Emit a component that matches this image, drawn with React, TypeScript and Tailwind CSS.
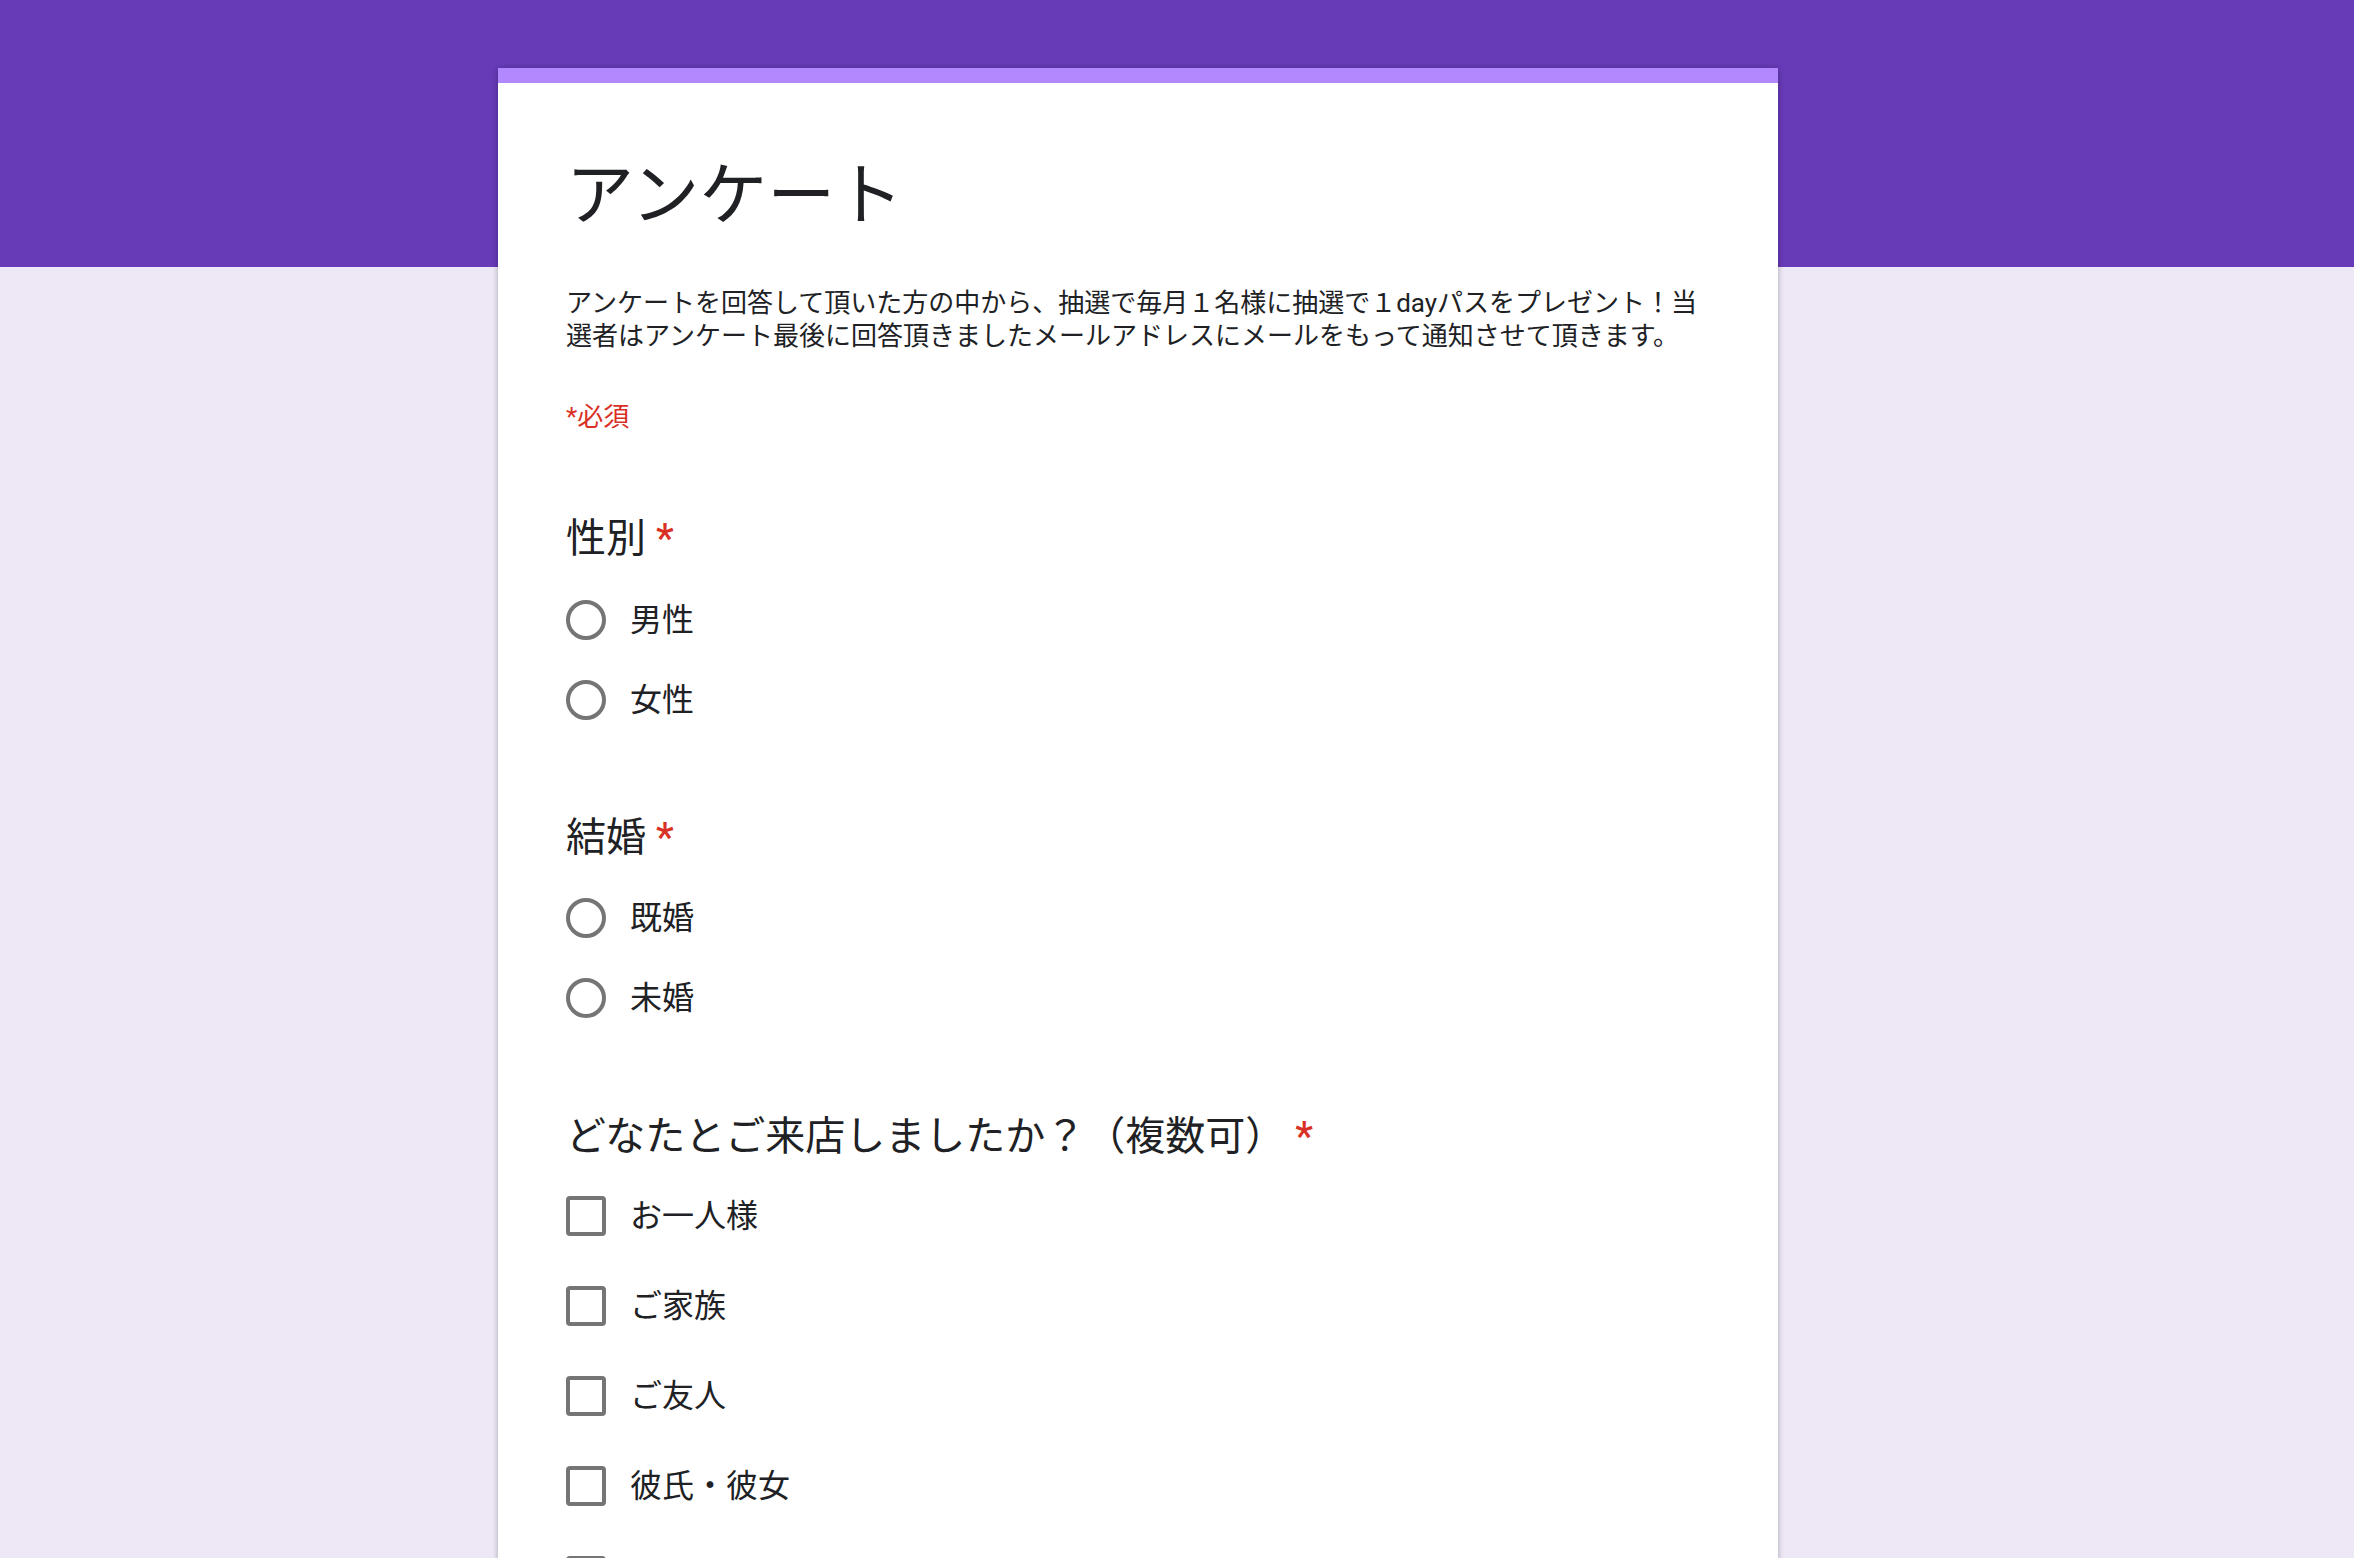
import React from "react";

const FONT = "font-[family-name:Roboto,'Noto_Sans_CJK_JP',sans-serif]";

function Radio({ label }: { label: string }) {
  return (
    <div className="flex h-[80px] items-center">
      <span className="box-border block h-[40px] w-[40px] shrink-0 rounded-full border-[4px] border-[#757575]" />
      <span className="ml-[24px] text-[32px] leading-[40px] text-[#202124]">{label}</span>
    </div>
  );
}

function Check({ label }: { label: string }) {
  return (
    <div className="flex h-[90px] items-center">
      <span className="box-border block h-[40px] w-[40px] shrink-0 rounded-[4px] border-[4px] border-[#757575]" />
      <span className="ml-[24px] text-[32px] leading-[40px] text-[#202124]">{label}</span>
    </div>
  );
}

function Question({ text, className }: { text: string; className: string }) {
  return (
    <div className={`flex items-start text-[40px] leading-[48px] text-[#202124] ${className}`}>
      <span>{text}</span>
      <span className="ml-[10px] font-[family-name:Roboto,sans-serif] text-[40px] font-medium leading-[48px] text-[#d93025]">*</span>
    </div>
  );
}

export default function App() {
  return (
    <div
      className={`min-h-screen w-full bg-[linear-gradient(to_bottom,#673ab7_0px,#673ab7_267px,#ede7f6_267px)] pt-[68px] ${FONT}`}
    >
      <div className="ml-[498px] w-[1280px] bg-white pb-[200px] shadow-[0_1px_6px_rgba(0,0,0,0.28)]">
        <div className="h-[15px] bg-[#b388ff]" />
        <div className="px-[68px]">
          <h1 className="mt-[73px] text-[68px] font-normal leading-[80px] text-[#202124]">アンケート</h1>
          <p className="mt-[51px] whitespace-nowrap text-[26px] leading-[33px] text-[#202124]">
            アンケートを回答して頂いた方の中から、抽選で毎月１名様に抽選で１dayパスをプレゼント！当
            <br />
            選者はアンケート最後に回答頂きましたメールアドレスにメールをもって通知させて頂きます。
          </p>
          <div className="mt-[48px] text-[26px] leading-[32px] text-[#d93025]">*必須</div>

          <Question text="性別" className="mt-[82px]" />
          <div className="mt-[17px]">
            <Radio label="男性" />
            <Radio label="女性" />
          </div>

          <Question text="結婚" className="mt-[74px]" />
          <div className="mt-[16px]">
            <Radio label="既婚" />
            <Radio label="未婚" />
          </div>

          <Question text="どなたとご来店しましたか？（複数可）" className="mt-[75px]" />
          <div className="mt-[10px]">
            <Check label="お一人様" />
            <Check label="ご家族" />
            <Check label="ご友人" />
            <Check label="彼氏・彼女" />
            <Check label="その他" />
          </div>
        </div>
      </div>
    </div>
  );
}
